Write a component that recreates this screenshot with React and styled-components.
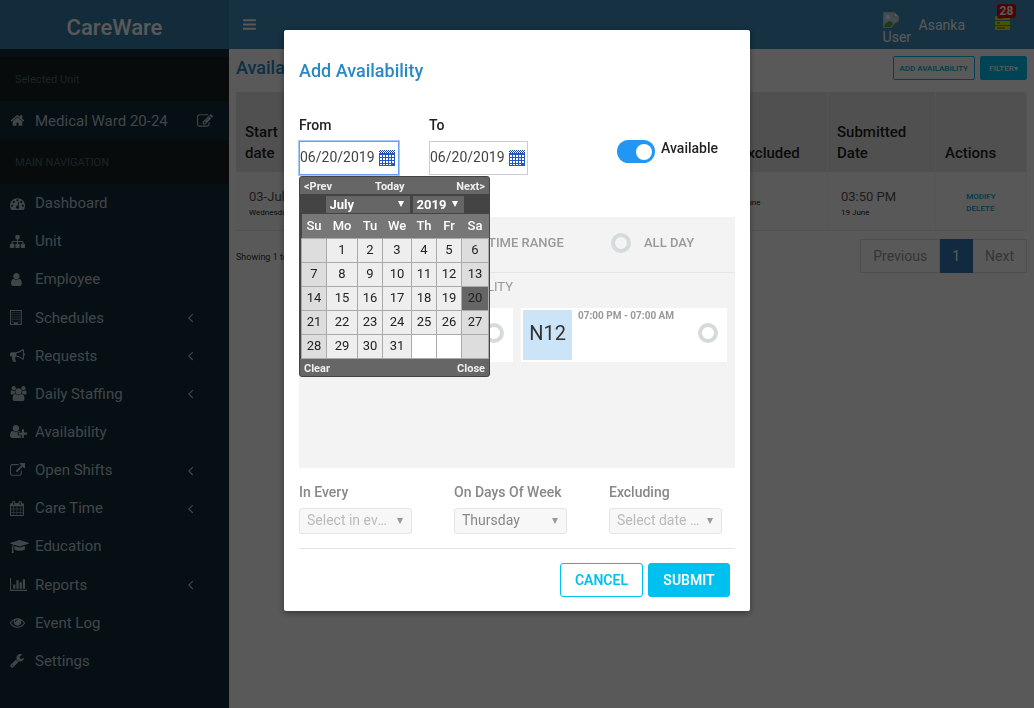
import React from "react";
import styled, { createGlobalStyle, css } from "styled-components";

const Global = createGlobalStyle`
  *, *::before, *::after { box-sizing: border-box; }
  html, body, #root { min-height: 100vh; margin: 0; }
  body { font-family: Roboto, "Liberation Sans", sans-serif; font-size: 14px; line-height: 20px; color: #333; background: #fff; }
  button, input, select { font-family: inherit; margin: 0; }
  ul { list-style: none; margin: 0; padding: 0; }
  a { text-decoration: none; color: inherit; }
`;

const glyphs = {
  bars: [1792, "M1664 1344v128q0 26-19 45t-45 19h-1408q-26 0-45-19t-19-45v-128q0-26 19-45t45-19h1408q26 0 45 19t19 45zm0-512v128q0 26-19 45t-45 19h-1408q-26 0-45-19t-19-45v-128q0-26 19-45t45-19h1408q26 0 45 19t19 45zm0-512v128q0 26-19 45t-45 19h-1408q-26 0-45-19t-19-45v-128q0-26 19-45t45-19h1408q26 0 45 19t19 45z"],
  home: [1792, "M1472 992v480q0 26-19 45t-45 19h-384v-384h-256v384h-384q-26 0-45-19t-19-45v-480q0-1 .5-3t.5-3l575-474 575 474q1 2 1 6zm223-69l-62 74q-8 9-21 11h-3q-13 0-21-7l-692-577-692 577q-12 8-24 7-13-2-21-11l-62-74q-8-10-7-23.5t11-21.5l719-599q32-26 76-26t76 26l244 204v-195q0-14 9-23t23-9h192q14 0 23 9t9 23v408l219 182q10 8 11 21.5t-7 23.5z"],
  edit: [1792, "M888 1184l116-116-152-152-116 116v56h96v96h56zm440-720q-16-16-33 1l-350 350q-17 17-1 33t33-1l350-350q17-17 1-33zm80 594v190q0 119-84.5 203.5t-203.5 84.5h-832q-119 0-203.5-84.5t-84.5-203.5v-832q0-119 84.5-203.5t203.5-84.5h832q63 0 117 25 15 7 18 23 3 17-9 29l-49 49q-14 14-32 8-23-6-45-6h-832q-66 0-113 47t-47 113v832q0 66 47 113t113 47h832q66 0 113-47t47-113v-126q0-13 9-22l64-64q15-15 35-7t20 29zm-96-738l288 288-672 672h-288v-288zm444 132l-92 92-288-288 92-92q28-28 68-28t68 28l152 152q28 28 28 68t-28 68z"],
  gauge: [1792, "M384 1152q0-53-37.5-90.5t-90.5-37.5-90.5 37.5-37.5 90.5 37.5 90.5 90.5 37.5 90.5-37.5 37.5-90.5zm192-448q0-53-37.5-90.5t-90.5-37.5-90.5 37.5-37.5 90.5 37.5 90.5 90.5 37.5 90.5-37.5 37.5-90.5zm428 481l101-382q6-26-7.5-48.5t-38.5-29.5-48 6.5-30 39.5l-101 382q-60 5-107 43.5t-63 98.5q-20 77 20 146t117 89 146-20 89-117q16-60-6-117t-72-91zm660-33q0-53-37.5-90.5t-90.5-37.5-90.5 37.5-37.5 90.5 37.5 90.5 90.5 37.5 90.5-37.5 37.5-90.5zm-640-640q0-53-37.5-90.5t-90.5-37.5-90.5 37.5-37.5 90.5 37.5 90.5 90.5 37.5 90.5-37.5 37.5-90.5zm448 192q0-53-37.5-90.5t-90.5-37.5-90.5 37.5-37.5 90.5 37.5 90.5 90.5 37.5 90.5-37.5 37.5-90.5zm320 448q0 261-141 483-19 29-54 29h-1402q-35 0-54-29-141-221-141-483 0-182 71-348t191-286 286-191 348-71 348 71 286 191 191 286 71 348z"],
  sitemap: [1792, "M1792 1248v320q0 40-28 68t-68 28h-320q-40 0-68-28t-28-68v-320q0-40 28-68t68-28h96v-192h-512v192h96q40 0 68 28t28 68v320q0 40-28 68t-68 28h-320q-40 0-68-28t-28-68v-320q0-40 28-68t68-28h96v-192h-512v192h96q40 0 68 28t28 68v320q0 40-28 68t-68 28h-320q-40 0-68-28t-28-68v-320q0-40 28-68t68-28h96v-192q0-52 38-90t90-38h512v-192h-96q-40 0-68-28t-28-68v-320q0-40 28-68t68-28h320q40 0 68 28t28 68v320q0 40-28 68t-68 28h-96v192h512q52 0 90 38t38 90v192h96q40 0 68 28t28 68z"],
  user: [1792, "M1408 1399q0 109-62.5 187t-150.5 78h-854q-88 0-150.5-78t-62.5-187q0-85 8.5-160.5t31.5-152 58.5-131 94-89 134.5-34.5q131 128 313 128t313-128q76 0 134.5 34.5t94 89 58.5 131 31.5 152 8.5 160.5zm-256-887q0 159-112.5 271.5t-271.5 112.5-271.5-112.5-112.5-271.5 112.5-271.5 271.5-112.5 271.5 112.5 112.5 271.5z"],
  building: [1792, "M0 0h1408v1792h-1408zM128 128v1536h320v-192h512v192h320v-1536zM256 256h128v128h-128zM512 256h128v128h-128zM768 256h128v128h-128zM1024 256h128v128h-128zM256 512h128v128h-128zM512 512h128v128h-128zM768 512h128v128h-128zM1024 512h128v128h-128zM256 768h128v128h-128zM512 768h128v128h-128zM768 768h128v128h-128zM1024 768h128v128h-128zM256 1024h128v128h-128zM512 1024h128v128h-128zM768 1024h128v128h-128zM1024 1024h128v128h-128zM256 1280h128v128h-128zM1024 1280h128v128h-128z"],
  bullhorn: [1792, "M1664 640q53 0 90.5 37.5t37.5 90.5-37.5 90.5-90.5 37.5v384q0 52-38 90t-90 38q-417-347-812-380-58 19-91 66t-31 100.5 40 92.5q-20 33-23 65.5t6 58 33.5 55 48 50 61.5 50.5q-29 58-111.5 83t-168.5 11.5-132-55.5q-7-23-29.5-87.5t-32-94.5-23-89-15-101 3.5-98.5 22-110.5h-122q-66 0-113-47t-47-113v-192q0-66 47-113t113-47h480q435 0 896-384 52 0 90 38t38 90v384zm-128 604v-954q-394 302-768 343v270q377 42 768 341z"],
  users: [2048, "M657 896q-162 5-265 128h-134q-82 0-138-40.5t-56-118.5q0-353 124-353 6 0 43.5 21t97.5 42.5 119 21.5q67 0 133-23-5 37-5 66 0 159 81 256zm1071 637q0 120-73 189.5t-194 69.5h-874q-121 0-194-69.5t-73-189.5q0-53 3.5-103.5t14-109 26.5-108.5 43-97.5 62-81 85.5-53.5 111.5-20q10 0 43 21.5t73 48 107 48 135 21.5 135-21.5 107-48 73-48 43-21.5q61 0 111.5 20t85.5 53.5 62 81 43 97.5 26.5 108.5 14 109 3.5 103.5zm-1024-1277q0 106-75 181t-181 75-181-75-75-181 75-181 181-75 181 75 75 181zm704 384q0 159-112.5 271.5t-271.5 112.5-271.5-112.5-112.5-271.5 112.5-271.5 271.5-112.5 271.5 112.5 112.5 271.5zm576 225q0 78-56 118.5t-138 40.5h-134q-103-123-265-128 81-97 81-256 0-29-5-66 66 23 133 23 59 0 119-21.5t97.5-42.5 43.5-21q124 0 124 353zm-128-609q0 106-75 181t-181 75-181-75-75-181 75-181 181-75 181 75 75 181z"],
  userPlus: [2048, "M704 896q-159 0-271.5-112.5t-112.5-271.5 112.5-271.5 271.5-112.5 271.5 112.5 112.5 271.5-112.5 271.5-271.5 112.5zm960 128h352q13 0 22.5 9.5t9.5 22.5v192q0 13-9.5 22.5t-22.5 9.5h-352v352q0 13-9.5 22.5t-22.5 9.5h-192q-13 0-22.5-9.5t-9.5-22.5v-352h-352q-13 0-22.5-9.5t-9.5-22.5v-192q0-13 9.5-22.5t22.5-9.5h352v-352q0-13 9.5-22.5t22.5-9.5h192q13 0 22.5 9.5t9.5 22.5v352zm-736 224q0 52 38 90t90 38h256v238q-68 50-171 50h-874q-121 0-194-69t-73-190q0-53 3.5-103.5t14-109 26.5-108.5 43-97.5 62-81 85.5-53.5 111.5-20q19 0 39 17 79 61 154.5 91.5t164.5 30.5 164.5-30.5 154.5-91.5q20-17 39-17 132 0 217 96h-223q-52 0-90 38t-38 90v192z"],
  external: [1792, "M1408 928v320q0 119-84.5 203.5t-203.5 84.5h-832q-119 0-203.5-84.5t-84.5-203.5v-832q0-119 84.5-203.5t203.5-84.5h704q14 0 23 9t9 23v64q0 14-9 23t-23 9h-704q-66 0-113 47t-47 113v832q0 66 47 113t113 47h832q66 0 113-47t47-113v-320q0-14 9-23t23-9h64q14 0 23 9t9 23zm384-864v512q0 26-19 45t-45 19-45-19l-176-176-652 652q-10 10-23 10t-23-10l-114-114q-10-10-10-23t10-23l652-652-176-176q-19-19-19-45t19-45 45-19h512q26 0 45 19t19 45z"],
  calendar: [1792, "M128 1664h288v-288h-288v288zm352 0h320v-288h-320v288zm-352-352h288v-320h-288v320zm352 0h320v-320h-320v320zm-352-384h288v-288h-288v288zm736 736h320v-288h-320v288zm-384-736h320v-288h-320v288zm768 736h288v-288h-288v288zm-384-352h320v-320h-320v320zm-352-864v-288q0-13-9.5-22.5t-22.5-9.5h-64q-13 0-22.5 9.5t-9.5 22.5v288q0 13 9.5 22.5t22.5 9.5h64q13 0 22.5-9.5t9.5-22.5zm736 864h288v-320h-288v320zm-384-384h320v-288h-320v288zm384 0h288v-288h-288v288zm32-480v-288q0-13-9.5-22.5t-22.5-9.5h-64q-13 0-22.5 9.5t-9.5 22.5v288q0 13 9.5 22.5t22.5 9.5h64q13 0 22.5-9.5t9.5-22.5zm384-64v1280q0 52-38 90t-90 38h-1408q-52 0-90-38t-38-90v-1280q0-52 38-90t90-38h128v-96q0-66 47-113t113-47h64q66 0 113 47t47 113v96h384v-96q0-66 47-113t113-47h64q66 0 113 47t47 113v96h128q52 0 90 38t38 90z"],
  cap: [2304, "M1774 836l18 316q4 69-82 128t-235 93.5-323 34.5-323-34.5-235-93.5-82-128l18-316 574 181q22 7 48 7t48-7zm530-324q0 23-22 31l-1120 352q-4 1-10 1t-10-1l-652-206q-43 34-71 111.5t-34 178.5q63 36 63 109 0 69-58 107l58 433q2 14-8 25-9 11-24 11h-192q-15 0-24-11-10-11-8-25l58-433q-58-38-58-107 0-73 65-111 11-207 98-330l-333-104q-22-8-22-31t22-31l1120-352q4-1 10-1t10 1l1120 352q22 8 22 31z"],
  chart: [2048, "M640 896v512h-256v-512h256zm384-512v1024h-256v-1024h256zm1024 1152v128h-2048v-1536h128v1408h1920zm-640-896v768h-256v-768h256zm384-384v1152h-256v-1152h256z"],
  eye: [1792, "M1664 960q-152-236-381-353 61 104 61 225 0 185-131.5 316.5t-316.5 131.5-316.5-131.5-131.5-316.5q0-121 61-225-229 117-381 353 133 205 333.5 326.5t434.5 121.5 434.5-121.5 333.5-326.5zm-720-384q0-20-14-34t-34-14q-125 0-214.5 89.5t-89.5 214.5q0 20 14 34t34 14 34-14 14-34q0-86 61-147t147-61q20 0 34-14t14-34zm848 384q0 34-20 69-140 230-376.5 368.5t-499.5 138.5-499.5-139-376.5-368q-20-35-20-69t20-69q140-229 376.5-368t499.5-139 499.5 139 376.5 368q20 35 20 69z"],
  wrench: [1792, "M384 1472q0-26-19-45t-45-19-45 19-19 45 19 45 45 19 45-19 19-45zm644-420l-682 682q-37 37-90 37-52 0-91-37l-106-108q-38-36-38-90 0-53 38-91l681-681q39 98 114.5 173.5t173.5 114.5zm634-435q0 39-23 106-47 134-164.5 217.5t-258.5 83.5q-185 0-316.5-131.5t-131.5-316.5 131.5-316.5 316.5-131.5q58 0 121.5 16.5t107.5 46.5q16 11 16 28t-16 28l-293 169v224l193 107q5-3 79-48.5t135.5-81 70.5-35.5q15 0 23.5 10t8.5 25z"],
  angle: [1792, "M1203 544q0 13-10 23l-393 393 393 393q10 10 10 23t-10 23l-50 50q-10 10-23 10t-23-10l-466-466q-10-10-10-23t10-23l466-466q10-10 23-10t23 10l50 50q10 10 10 23z"],
};

const Glyph = styled.svg`
  display: block;
  height: ${(p) => p.$size}px;
  width: auto;
  fill: currentColor;
  overflow: visible;
`;
const Icon = ({ name, size = 15 }) => (
  <Glyph $size={size} viewBox={`0 0 ${glyphs[name][0]} 1792`} aria-hidden="true">
    <path fillRule={name === "building" ? "evenodd" : "nonzero"} d={glyphs[name][1]} />
  </Glyph>
);

/* ---------- page shell ---------- */
const Shell = styled.div`display: grid; grid-template-columns: 229px minmax(0, 1fr); min-height: 100vh;`;
const Sidebar = styled.aside`background: #132b3b; color: #b8c7ce; font-size: 15px;`;
const Brand = styled.a`
  display: block; height: 49px; padding-top: 7px; margin-bottom: 8px;
  background: #367fa9; color: #fff; text-align: center;
  font-size: 22px; line-height: 42px; font-weight: 500;
`;
const SideHeading = styled.h2`
  margin: 0; padding: 13px 15px 11px; background: #172023; color: #4b646f;
  font-size: 11px; line-height: 20px; font-weight: 400;
`;
const UnitRow = styled.div`display: flex; align-items: center; height: 39px; padding: 0 16px 0 10px;`;
const IconButton = styled.button`border: 0; padding: 0; background: none; color: inherit;`;
const IconSlot = styled.span`flex: 0 0 25px;`;
const Grow = styled.span`flex: 1;`;
const Menu = styled.ul`display: grid; grid-auto-rows: 1fr; min-height: 496px;`;
const MenuLink = styled.a`display: flex; align-items: center; height: 100%; padding: 0 31px 0 10px;`;

const Body = styled.div`background: #fff; min-width: 0;`;
const TopBar = styled.header`
  display: flex; align-items: center; height: 49px; padding: 0 24px 0 13px;
  background: #3c8dbc; color: #fff;
`;
const UserLink = styled.a`display: flex; align-items: center; gap: 6px; margin-right: 30px;`;
const Avatar = styled.span`display: block; width: 30px; padding-top: 9px; line-height: 18px;`;
const Alerts = styled.button`position: relative; border: 0; padding: 0; background: none;`;
const Count = styled.span`
  position: absolute; top: -12px; left: 2px; width: 19px; height: 14px; border-radius: 3px;
  background: #dd0b0b; color: #fff; font-size: 12px; line-height: 14px; font-weight: 700; text-align: center;
`;
const Content = styled.main`padding: 7px 7px 0;`;
const TitleRow = styled.div`display: flex; align-items: center; height: 24px; margin-bottom: 12px; gap: 5px;`;
const PageTitle = styled.h1`flex: 1; margin: 0; color: #2a8ac4; font-size: 18px; line-height: 24px; font-weight: 500;`;
const SmallButton = styled.button`
  height: 24px; padding: 0 6px; border: 1px solid #00c0ef; border-radius: 2px;
  min-width: 47px; background: ${(p) => (p.$solid ? "#00c0ef" : "#fff")};
  color: ${(p) => (p.$solid ? "#fff" : "#00a9d4")};
  font-size: 8px; font-weight: 500; text-transform: uppercase; white-space: nowrap;
`;
const Table = styled.table`
  width: 100%; border-collapse: collapse; table-layout: fixed; color: #333;
  border-bottom: 1px solid #eaeaea;
  th { height: 80px; padding: 8px 9px; background: #e6e6e6; border-right: 1px solid #f0f0f0;
    color: #222; font-size: 15px; line-height: 21px; font-weight: 500; text-align: left; vertical-align: bottom; }
  td { height: 58px; padding: 14px 13px 10px; border-right: 1px solid #f4f4f4; background: #fcfcfc;
    color: #555; font-size: 13px; line-height: 20px; vertical-align: middle; white-space: nowrap; overflow: hidden; }
`;
const Tiny = styled.small`display: block; color: #222; font-size: 8px; line-height: 12px;`;
const RowActions = styled.div`
  display: grid; justify-content: center;
  color: #00a5d9; font-size: 8px; line-height: 12px; font-weight: 500;
`;
const TableFoot = styled.div`display: flex; justify-content: space-between; margin-top: 8px; font-size: 9px; line-height: 36px; color: #333;`;
const Pager = styled.ul`display: flex; height: 34px;`;
const PageLink = styled.a`
  display: block; height: 34px; padding: 0 12px; border: 1px solid #e3e3e3; border-left-width: ${(p) => (p.$first ? 1 : 0)}px;
  font-size: 14px; line-height: 32px; color: #999;
  ${(p) => p.$active && css`background: #337ab7; border-color: #337ab7; color: #fff;`}
`;

/* ---------- dialog ---------- */
const Overlay = styled.div`
  position: fixed; inset: 0; display: flex; justify-content: center; align-items: flex-start;
  padding-top: 30px; background: rgba(0, 0, 0, 0.65);
`;
const Dialog = styled.section`
  width: 466px; padding: 15px; background: #fff; border-radius: 2px;
  box-shadow: 0 2px 6px rgba(0, 0, 0, 0.4);
`;
const DialogTitle = styled.h2`margin: 12px 0 32px; color: #2a8ac4; font-size: 18px; line-height: 28px; font-weight: 500;`;
const DateRow = styled.div`display: flex; align-items: flex-start; height: 100px;`;
const DateField = styled.div`position: relative; width: 130px;`;
const Label = styled.label`display: block; color: ${(p) => (p.$muted ? "#888" : "#222")}; font-size: 14px; line-height: 16px; font-weight: 500;`;
const DateBox = styled.div`
  display: flex; align-items: center; width: 99px; height: 34px; margin-top: 8px;
  border: 1px solid ${(p) => (p.$focus ? "#6a9ff5" : "#ccc9dd")};
  ${(p) => p.$focus && css`width: 100px; box-shadow: 0 0 0 1px #a9c8fd;`}
`;
const DateInput = styled.input`width: 79px; min-width: 0; border: 0; padding: 0 0 2px; outline: 0; background: none; color: #444; font-size: 14px;`;
const Switch = styled.label`
  display: flex; align-items: flex-start; gap: 6px; margin: 23px 0 0 auto; padding-right: 17px; color: #222; line-height: 16px; font-weight: 500;
  input { appearance: none; display: flex; align-items: center; width: 38px; height: 23px; margin: 0; padding: 0 3px; border-radius: 12px; background: #2196f3; justify-content: flex-end; }
  input::before { content: ""; width: 16px; height: 16px; border-radius: 50%; background: #fff; }
`;

const Calendar = styled.div`
  position: absolute; z-index: 2; top: 59px; left: 0; width: 191px;
  border: 1px solid #444; border-radius: 3px; background: #444; color: #fff; overflow: hidden;
`;
const CalBar = styled.div`
  display: grid; grid-template-columns: 71px 1fr auto; height: 17px; padding: 2px 4px 0; background: #666;
  button { border: 0; padding: 0; background: none; color: #eee; font-size: 11px; line-height: 15px; font-weight: 700; text-align: left; }
  button:last-child { grid-column: 3; }
`;
const CalSelects = styled.div`display: flex; justify-content: center; gap: 3px; height: 20px; padding: 2px 0 1px;`;
const CalSelect = styled.span`
  position: relative; display: block; width: ${(p) => p.$w}px;
  select { appearance: none; width: 100%; height: 17px; border: 0; padding: 0 4px; background: #666; color: #fff; font-size: 13px; font-weight: 700; display: block; }
  &::after { content: ""; position: absolute; right: 6px; top: 5px; border: 3px solid transparent; border-top: 6px solid #fff; border-bottom: 0; pointer-events: none; }
`;
const CalBody = styled.div`padding: 0 1px;`;
const CalTable = styled.table`
  width: 100%; border-collapse: collapse; table-layout: fixed;
  th { height: 24px; padding: 0; background: #777; font-size: 13px; line-height: 20px; font-weight: 500; color: #fff; }
`;
const Day = styled.td`
  height: 24px; padding: 0; border: 1px solid #aaa; text-align: center;
  font-size: 13px; line-height: 20px; color: #222;
  background: ${(p) => (p.$picked ? "#666" : p.$weekend ? "#ddd" : p.$blank ? "#fff" : "#eee")};
`;

const ShiftPanel = styled.div`height: 251px; background: #f3f3f3; color: #999;`;
const ModeRow = styled.div`display: grid; grid-template-columns: 144px 156px 1fr; align-items: center; height: 56px; padding: 0 0 4px 12px; border-bottom: 1px solid #e5e5e5;`;
const Mode = styled.label`display: flex; align-items: center; gap: 13px; font-size: 13px; font-weight: 500; white-space: nowrap;`;
const Radio = styled.input`
  appearance: none; flex: none; width: 20px; height: 20px; margin: 0;
  border: 4px solid #d5dbdd; border-radius: 50%; background: #f3f3f3;
`;
const PanelHeading = styled.h3`width: 214px; margin: 0; padding: 4px 0 11px; font-size: 13px; line-height: 20px; font-weight: 400; text-align: right;`;
const ShiftGrid = styled.div`display: grid; grid-template-columns: 1fr 1fr; gap: 8px; padding: 0 8px;`;
const Shift = styled.label`
  display: flex; align-items: flex-start; height: 54px; padding: 2px 9px 2px 2px; background: #fff;
  input { background: #fff; margin: 13px 0 0 auto; }
`;
const Code = styled.span`width: 49px; height: 50px; background: #cce4f7; color: #333; font-size: 20px; line-height: 46px; text-align: center;`;
const Hours = styled.span`padding-left: 6px; font-size: 10px; line-height: 12px; font-weight: 700;`;

const RepeatRow = styled.div`display: grid; grid-template-columns: repeat(3, 113px); column-gap: 42px; padding: 16px 0 14px; border-bottom: 1px solid #e5e5e5;`;
const RepeatField = styled.div`
  position: relative; white-space: nowrap;
  select { appearance: none; display: block; width: 113px; height: 26px; margin-top: 8px; padding: 0 21px 2px 7px; border: 1px solid #e5e5e5; border-radius: 3px;
    background: #f7f7f7; color: ${(p) => (p.$empty ? "#bbb" : "#888")}; font-size: 14px; opacity: 1; text-overflow: ellipsis; }
  &::after { content: ""; position: absolute; right: 9px; bottom: 10px; border: 3px solid transparent; border-top: 6px solid #999; border-bottom: 0; }
`;
const Actions = styled.div`display: flex; justify-content: flex-end; gap: 5px; padding: 14px 5px 0 0; margin-bottom: -1px;`;
const ActionButton = styled.button`
  min-width: 82px; height: 34px; padding: 0 14px; border: 1px solid #00c0ef; border-radius: 3px;
  background: ${(p) => (p.$solid ? "#00c0ef" : "#fff")}; color: ${(p) => (p.$solid ? "#fff" : "#00c0ef")};
  font-size: 14px; font-weight: 600;
`;

const DayIcon = () => (
  <svg width="16" height="16" viewBox="0 0 16 16" aria-hidden="true">
    <path d="M0 3h16v13H0z" fill="#2456c8" />
    <path d="M0 1h1v1H0zM2 1h1v1H2zM4 1h1v1H4zM6 1h1v1H6zM8 1h1v1H8zM10 1h1v1h-1zM12 1h1v1h-1zM14 1h1v1h-1zM1 0h1v1H1zM3 0h1v1H3zM5 0h1v1H5zM7 0h1v1H7zM9 0h1v1H9zM11 0h1v1h-1zM13 0h1v1h-1zM15 0h1v1h-1zM1 2h1v1H1zM3 2h1v1H3zM5 2h1v1H5zM7 2h1v1H7zM9 2h1v1H9zM11 2h1v1h-1zM13 2h1v1h-1zM15 2h1v1h-1z" fill="#1c3f94" />
    <path d="M1 5h2v2H1zM4 5h2v2H4zM7 5h2v2H7zM10 5h2v2h-2zM13 5h2v2h-2zM1 8h2v2H1zM4 8h2v2H4zM7 8h2v2H7zM13 8h2v2h-2zM1 11h2v2H1zM4 11h2v2H4zM7 11h2v2H7zM10 11h2v2h-2zM13 11h2v2h-2zM1 14h2v1H1zM4 14h2v1H4zM7 14h2v1H7zM10 14h2v1h-2z" fill="#fff" />
    <path d="M10 8h2v2h-2z" fill="#bfe0ff" />
  </svg>
);
const ImageGlyph = styled.svg`display: block;`;
const BrokenImage = () => (
  <ImageGlyph width="16" height="16" viewBox="0 0 16 16" aria-hidden="true">
    <path d="M0 0h11l5 5v4l-5 3-3 4H0z" fill="#c4d6f4" stroke="#aaa" />
    <path d="M11 0v5h5" fill="#fff" stroke="#aaa" />
    <circle cx="5" cy="5" r="2" fill="#fff" />
    <path d="M1 15c1-5 5-7 8-5l1 2-3 3zM12 14l3-3v4h-4z" fill="#4ea93b" />
  </ImageGlyph>
);
const Stack = () => (
  <svg width="15" height="14" viewBox="0 0 15 14" fill="#e6e600" aria-hidden="true">
    <rect y="0" width="15" height="4" rx="1" /><rect y="5" width="15" height="4" rx="1" /><rect y="10" width="15" height="4" rx="1" />
    <path d="M2 2h6M2 7h3M2 12h8" stroke="#555500" />
  </svg>
);

const nav = [
  ["gauge", "Dashboard"], ["sitemap", "Unit"], ["user", "Employee"], ["building", "Schedules", 1],
  ["bullhorn", "Requests", 1], ["users", "Daily Staffing", 1], ["userPlus", "Availability"],
  ["external", "Open Shifts", 1], ["calendar", "Care Time", 1], ["cap", "Education"],
  ["chart", "Reports", 1], ["eye", "Event Log"], ["wrench", "Settings"],
];
const weeks = [0, 1, 2, 3, 4].map((w) =>
  [0, 1, 2, 3, 4, 5, 6].map((d) => w * 7 + d).map((n) => (n > 31 || n === 0 ? "" : n))
);

export default function App() {
  return (
    <>
      <Global />
      <Shell>
        <Sidebar>
          <Brand href="#">CareWare</Brand>
          <SideHeading>Selected Unit</SideHeading>
          <UnitRow>
            <IconSlot><Icon name="home" /></IconSlot>
            <Grow>Medical Ward 20-24</Grow>
            <IconButton aria-label="Change unit"><Icon name="edit" size={16} /></IconButton>
          </UnitRow>
          <SideHeading>MAIN NAVIGATION</SideHeading>
          <Menu>
            {nav.map(([icon, text, sub]) => (
              <li key={text}>
                <MenuLink href="#">
                  <IconSlot><Icon name={icon} /></IconSlot>
                  <Grow>{text}</Grow>
                  {sub && <Icon name="angle" />}
                </MenuLink>
              </li>
            ))}
          </Menu>
        </Sidebar>
        <Body>
          <TopBar>
            <IconButton aria-label="Toggle navigation"><Icon name="bars" /></IconButton>
            <Grow />
            <UserLink href="#"><Avatar><BrokenImage />User</Avatar>Asanka</UserLink>
            <Alerts aria-label="Alerts"><Stack /><Count>28</Count></Alerts>
          </TopBar>
          <Content>
            <TitleRow>
              <PageTitle>Availability</PageTitle>
              <SmallButton>Add Availability</SmallButton>
              <SmallButton $solid>Filter▾</SmallButton>
            </TitleRow>
            <Table>
              <colgroup><col width="110" /><col /><col width="98" /><col width="108" /><col width="91" /></colgroup>
              <thead>
                <tr><th>Start<br />date</th><th /><th>Excluded</th><th>Submitted Date</th><th>Actions</th></tr>
              </thead>
              <tbody>
                <tr>
                  <td>03-July<Tiny>Wednesday</Tiny></td><td /><td><Tiny>June</Tiny></td>
                  <td>03:50 PM<Tiny>19 June</Tiny></td>
                  <td><RowActions><a href="#">MODIFY</a><a href="#">DELETE</a></RowActions></td>
                </tr>
              </tbody>
            </Table>
            <TableFoot>
              <span>Showing 1 to 1</span>
              <Pager>
                <li><PageLink href="#" $first>Previous</PageLink></li>
                <li><PageLink href="#" $active>1</PageLink></li>
                <li><PageLink href="#">Next</PageLink></li>
              </Pager>
            </TableFoot>
          </Content>
        </Body>
      </Shell>

      <Overlay>
        <Dialog role="dialog" aria-labelledby="dialog-title">
          <DialogTitle id="dialog-title">Add Availability</DialogTitle>
          <DateRow>
            <DateField>
              <Label htmlFor="from">From</Label>
              <DateBox $focus><DateInput id="from" defaultValue="06/20/2019" /><DayIcon /></DateBox>
              <Calendar>
                <CalBar><button>&lt;Prev</button><button>Today</button><button>Next&gt;</button></CalBar>
                <CalSelects>
                  <CalSelect $w={84}><select aria-label="Month" defaultValue="July"><option>July</option></select></CalSelect>
                  <CalSelect $w={51}><select aria-label="Year" defaultValue="2019"><option>2019</option></select></CalSelect>
                </CalSelects>
                <CalBody>
                  <CalTable>
                    <colgroup>{[25, 31, 25, 29, 25, 25, 27].map((w, i) => <col key={i} width={w} />)}</colgroup>
                    <thead><tr>{["Su", "Mo", "Tu", "We", "Th", "Fr", "Sa"].map((d) => <th key={d}>{d}</th>)}</tr></thead>
                    <tbody>
                      {weeks.map((row, w) => (
                        <tr key={w}>
                          {row.map((n, d) => <Day key={d} $picked={n === 20} $weekend={d === 0 || d === 6} $blank={!n}>{n}</Day>)}
                        </tr>
                      ))}
                    </tbody>
                  </CalTable>
                </CalBody>
                <CalBar><button>Clear</button><button>Close</button></CalBar>
              </Calendar>
            </DateField>
            <DateField>
              <Label htmlFor="to">To</Label>
              <DateBox><DateInput id="to" defaultValue="06/20/2019" /><DayIcon /></DateBox>
            </DateField>
            <Switch><input type="checkbox" role="switch" defaultChecked />Available</Switch>
          </DateRow>
          <ShiftPanel>
            <ModeRow>
              <Mode><Radio type="radio" name="mode" aria-label="Shift" /></Mode>
              <Mode><Radio type="radio" name="mode" />TIME RANGE</Mode>
              <Mode><Radio type="radio" name="mode" />ALL DAY</Mode>
            </ModeRow>
            <PanelHeading>AVAILABILITY</PanelHeading>
            <ShiftGrid>
              <Shift><Radio type="radio" name="shift" aria-label="Day shift" /></Shift>
              <Shift><Code>N12</Code><Hours>07:00 PM - 07:00 AM</Hours><Radio type="radio" name="shift" /></Shift>
            </ShiftGrid>
          </ShiftPanel>
          <RepeatRow>
            <RepeatField $empty>
              <Label htmlFor="every" $muted>In Every</Label>
              <select id="every" disabled><option>Select in every</option></select>
            </RepeatField>
            <RepeatField>
              <Label htmlFor="days" $muted>On Days Of Week</Label>
              <select id="days" disabled><option>Thursday</option></select>
            </RepeatField>
            <RepeatField $empty>
              <Label htmlFor="excluding" $muted>Excluding</Label>
              <select id="excluding" disabled><option>Select date to exclude</option></select>
            </RepeatField>
          </RepeatRow>
          <Actions>
            <ActionButton>CANCEL</ActionButton>
            <ActionButton $solid>SUBMIT</ActionButton>
          </Actions>
        </Dialog>
      </Overlay>
    </>
  );
}
